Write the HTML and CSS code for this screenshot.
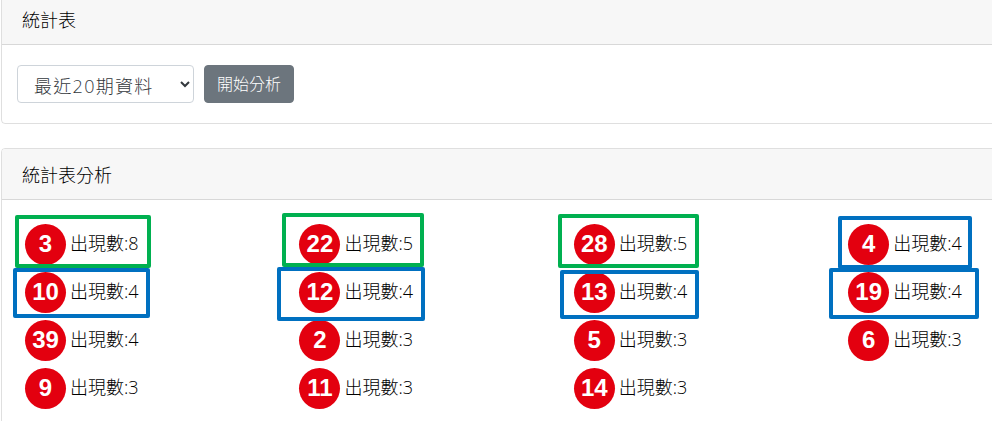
FILE: index.html
```html
<!DOCTYPE html>
<html lang="zh-Hant">
<head>
<meta charset="utf-8">
<title>統計表</title>
<link rel="stylesheet" href="styles.css">
</head>
<body>
<div class="page">
  <section class="card">
    <h2 class="card-header">統計表</h2>
    <div class="card-body toolbar">
      <select class="period"><option>最近20期資料</option></select>
      <button class="analyze" type="button">開始分析</button>
    </div>
  </section>
  <section class="card">
    <h2 class="card-header">統計表分析</h2>
    <div class="card-body results">
      <div class="grid">
        <div class="cell"><span class="ball">3</span><span class="count">出現數:8</span></div>
        <div class="cell"><span class="ball">22</span><span class="count">出現數:5</span></div>
        <div class="cell"><span class="ball">28</span><span class="count">出現數:5</span></div>
        <div class="cell"><span class="ball">4</span><span class="count">出現數:4</span></div>
        <div class="cell"><span class="ball">10</span><span class="count">出現數:4</span></div>
        <div class="cell"><span class="ball">12</span><span class="count">出現數:4</span></div>
        <div class="cell"><span class="ball">13</span><span class="count">出現數:4</span></div>
        <div class="cell"><span class="ball">19</span><span class="count">出現數:4</span></div>
        <div class="cell"><span class="ball">39</span><span class="count">出現數:4</span></div>
        <div class="cell"><span class="ball">2</span><span class="count">出現數:3</span></div>
        <div class="cell"><span class="ball">5</span><span class="count">出現數:3</span></div>
        <div class="cell"><span class="ball">6</span><span class="count">出現數:3</span></div>
        <div class="cell"><span class="ball">9</span><span class="count">出現數:3</span></div>
        <div class="cell"><span class="ball">11</span><span class="count">出現數:3</span></div>
        <div class="cell"><span class="ball">14</span><span class="count">出現數:3</span></div>
      </div>
      <div class="mark green g1"></div>
      <div class="mark green g2"></div>
      <div class="mark green g3"></div>
      <div class="mark blue b1"></div>
      <div class="mark blue b2"></div>
      <div class="mark blue b3"></div>
      <div class="mark blue b4"></div>
      <div class="mark blue b5"></div>
    </div>
  </section>
</div>
</body>
</html>
```

FILE: styles.css
```css
html, body {
  margin: 0;
  height: 421px;
  overflow: hidden;
  background: #fff;
}
body {
  font-family: "Open Sans", "Noto Sans CJK TC", sans-serif;
  font-weight: 300;
  color: #000;
}
.page {
  width: 1130px;
  margin: -7px 0 0 1px;
  display: flex;
  flex-direction: column;
  gap: 24px;
}
.card {
  border: 1px solid rgba(0, 0, 0, .125);
  border-radius: 4px;
}
.card-header {
  margin: 0;
  height: 50px;
  padding: 0 20px;
  display: flex;
  align-items: center;
  font-size: 18px;
  font-weight: 300;
  background: #f7f7f7;
  border-bottom: 1px solid rgba(0, 0, 0, .125);
  border-radius: 3px 3px 0 0;
}
.toolbar {
  padding: 20px 15px;
  display: flex;
  gap: 10px;
}
.period {
  width: 177px;
  height: 38px;
  padding: 3px 12px 0;
  font-family: "Open Sans", "Noto Sans CJK TC", sans-serif;
  font-size: 18px;
  font-weight: 300;
  letter-spacing: 1.3px;
  color: #33383d;
  background: #fff;
  border: 1px solid #ced4da;
  border-radius: 4px;
}
.analyze {
  width: 90px;
  height: 38px;
  padding: 0 0 2px;
  font-family: "Noto Sans CJK TC", "Open Sans", sans-serif;
  font-size: 16px;
  font-weight: 300;
  color: #fff;
  background: #6c757d;
  border: 1px solid #6c757d;
  border-radius: 4px;
}
.results {
  position: relative;
  padding: 20px 15px;
  height: 240px;
  box-sizing: border-box;
}
.grid {
  display: grid;
  grid-template-columns: repeat(4, 274.4px);
  grid-auto-rows: 48px;
}
.cell {
  display: flex;
  align-items: center;
  gap: 4px;
  padding-left: 8px;
}
.ball {
  width: 41px;
  height: 41px;
  flex: none;
  display: flex;
  align-items: center;
  justify-content: center;
  border-radius: 50%;
  background: #e3000f;
  color: #fff;
  font-family: "Liberation Sans", Arial, sans-serif;
  font-size: 24px;
  font-weight: 700;
}
.count {
  font-size: 18px;
  line-height: 24px;
  color: #000;
  margin-top: -2px;
}
.mark {
  position: absolute;
  box-sizing: border-box;
  border: 4px solid;
  border-radius: 2px;
}
.green { border-color: #00b050; }
.blue { border-color: #0070c0; }
/* hand-drawn highlights: offsets from the results panel at x=2, y=200 */
.g1 { left: 13px; top: 15px; width: 136px; height: 53px; }
.g2 { left: 280px; top: 13px; width: 142px; height: 54px; }
.g3 { left: 556px; top: 14px; width: 141px; height: 54px; }
.b1 { left: 11px; top: 68px; width: 137px; height: 50px; }
.b2 { left: 275px; top: 67px; width: 148px; height: 54px; }
.b3 { left: 558px; top: 70px; width: 139px; height: 49px; }
.b4 { left: 836px; top: 16px; width: 134px; height: 53px; }
.b5 { left: 827px; top: 68px; width: 150px; height: 51px; }
```
